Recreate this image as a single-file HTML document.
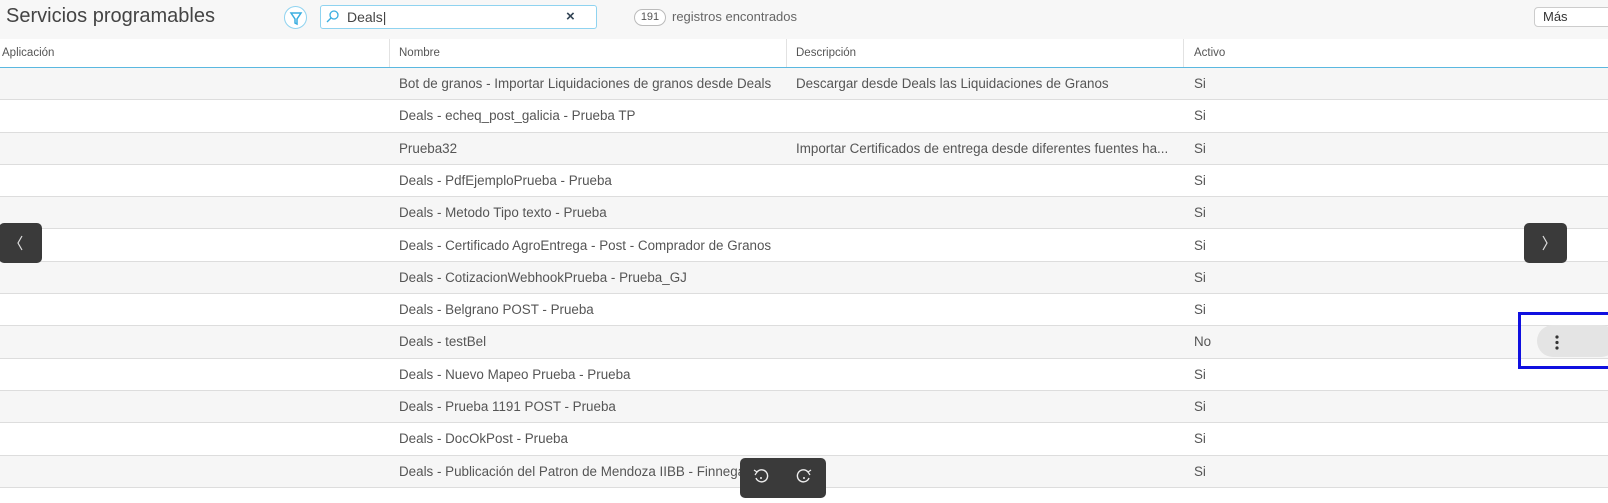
<!DOCTYPE html>
<html><head><meta charset="utf-8"><style>
*{margin:0;padding:0;box-sizing:border-box}
body{width:1608px;height:495px;overflow:hidden;background:#fff;font-family:"Liberation Sans",sans-serif;color:#555;position:relative}
.top{position:absolute;left:0;top:0;width:1608px;height:39px;background:#f7f7f7}
.title{position:absolute;left:6px;top:5px;font-size:20px;color:#444}
.filt{position:absolute;left:284px;top:6px;width:23px;height:23px;border:1px solid #8fd3f0;border-radius:50%;background:#fff}
.search{position:absolute;left:320px;top:5px;width:277px;height:24px;border:1px solid #8fd3f0;border-radius:3px;background:#fff}
.badge{position:absolute;left:634px;top:9px;width:32px;height:17px;border:1px solid #bbb;border-radius:9px;font-size:11px;text-align:center;line-height:15px;color:#555;background:#fff}
.mas{position:absolute;left:1534px;top:7px;width:80px;height:20px;border:1px solid #ccc;border-radius:4px;background:#fff;font-size:13px;padding-left:8px;line-height:18px;color:#333}
.hdr{position:absolute;top:39px;left:0;width:1608px;height:30px;border-bottom:2px solid #5bb8e0;background:#fff;font-size:11.5px}
.hdr span{position:absolute;top:8px}
.vl{position:absolute;top:0;height:28px;width:1px;background:#e2e2e2}
.row{position:absolute;left:0;width:1608px;height:32.3px;border-bottom:1px solid #ddd;font-size:13.4px}
.row span{position:absolute;top:8px;white-space:nowrap}
.g{background:#f6f6f6}
.nav{position:absolute;top:223px;width:43px;height:40px;background:#3a3a3a;border-radius:5px}
</style></head><body>
<div class="top"></div>
<div class="title">Servicios programables</div>
<div class="filt"><svg width="23" height="23" viewBox="0 0 23 23"><path d="M6 6h10l-4 6v5l-2-1v-4z" fill="none" stroke="#3aaee0" stroke-width="1.5"/></svg></div>
<div class="search"><svg style="position:absolute;left:4px;top:3px" width="16" height="16"><circle cx="9" cy="6" r="4" fill="none" stroke="#3aaee0" stroke-width="1.3"/><path d="M6 9l-4 4" stroke="#3aaee0" stroke-width="1.3"/></svg><span style="position:absolute;left:26px;top:3px;font-size:14px;color:#444">Deals|</span><span style="position:absolute;left:245px;top:2px;font-size:15px;font-weight:bold;color:#345">×</span></div>
<div class="badge">191</div>
<div style="position:absolute;left:672px;top:9px;font-size:13px;color:#666">registros encontrados</div>
<div class="mas">Más</div>
<div class="hdr"><span style="left:2px">Aplicación</span><span style="left:399px">Nombre</span><span style="left:796px">Descripción</span><span style="left:1194px">Activo</span>
<div class="vl" style="left:389px"></div><div class="vl" style="left:786px"></div><div class="vl" style="left:1183px"></div></div>
<div class="row g" style="top:68px"><span style="left:399px">Bot de granos - Importar Liquidaciones de granos desde Deals</span><span style="left:796px">Descargar desde Deals las Liquidaciones de Granos</span><span style="left:1194px">Si</span></div>
<div class="row" style="top:100.3px"><span style="left:399px">Deals - echeq_post_galicia - Prueba TP</span><span style="left:1194px">Si</span></div>
<div class="row g" style="top:132.6px"><span style="left:399px">Prueba32</span><span style="left:796px">Importar Certificados de entrega desde diferentes fuentes ha...</span><span style="left:1194px">Si</span></div>
<div class="row" style="top:164.9px"><span style="left:399px">Deals - PdfEjemploPrueba - Prueba</span><span style="left:1194px">Si</span></div>
<div class="row g" style="top:197.2px"><span style="left:399px">Deals - Metodo Tipo texto - Prueba</span><span style="left:1194px">Si</span></div>
<div class="row" style="top:229.5px"><span style="left:399px">Deals - Certificado AgroEntrega - Post - Comprador de Granos</span><span style="left:1194px">Si</span></div>
<div class="row g" style="top:261.8px"><span style="left:399px">Deals - CotizacionWebhookPrueba - Prueba_GJ</span><span style="left:1194px">Si</span></div>
<div class="row" style="top:294.1px"><span style="left:399px">Deals - Belgrano POST - Prueba</span><span style="left:1194px">Si</span></div>
<div class="row g" style="top:326.4px"><span style="left:399px">Deals - testBel</span><span style="left:1194px">No</span></div>
<div class="row" style="top:358.7px"><span style="left:399px">Deals - Nuevo Mapeo Prueba - Prueba</span><span style="left:1194px">Si</span></div>
<div class="row g" style="top:391px"><span style="left:399px">Deals - Prueba 1191 POST - Prueba</span><span style="left:1194px">Si</span></div>
<div class="row" style="top:423.3px"><span style="left:399px">Deals - DocOkPost - Prueba</span><span style="left:1194px">Si</span></div>
<div class="row g" style="top:455.6px"><span style="left:399px">Deals - Publicación del Patron de Mendoza IIBB - Finnegans</span><span style="left:1194px">Si</span></div>
<div class="nav" style="left:-1px"><svg width="43" height="40"><path d="M23 13l-4 7 4 7" fill="none" stroke="#ddd" stroke-width="1.2"/></svg></div>
<div class="nav" style="left:1524px"><svg width="43" height="40"><path d="M19 13l4 7-4 7" fill="none" stroke="#ddd" stroke-width="1.2"/></svg></div>
<div style="position:absolute;left:1518px;top:312px;width:95px;height:57px;border:3px solid #1010e0"></div>
<div style="position:absolute;left:1537px;top:325px;width:80px;height:32px;border-radius:16px;background:#e4e4e4"></div>
<svg style="position:absolute;left:1553px;top:333px" width="8" height="20"><circle cx="4" cy="4" r="1.6" fill="#333"/><circle cx="4" cy="9.5" r="1.6" fill="#333"/><circle cx="4" cy="15" r="1.6" fill="#333"/></svg>
<div style="position:absolute;left:740px;top:458px;width:86px;height:40px;background:#3a3a3a;border-radius:5px"><svg width="86" height="40"><path d="M17 14a6 6 0 1 1-1 6" fill="none" stroke="#eee" stroke-width="1.4"/><path d="M14 12l3 2-2 3" fill="none" stroke="#eee" stroke-width="1.2"/><circle cx="21" cy="20" r="1" fill="#eee"/><path d="M68 14a6 6 0 1 0 1 6" fill="none" stroke="#eee" stroke-width="1.4"/><path d="M71 12l-3 2 2 3" fill="none" stroke="#eee" stroke-width="1.2"/><circle cx="64" cy="20" r="1" fill="#eee"/></svg></div>
</body></html>
